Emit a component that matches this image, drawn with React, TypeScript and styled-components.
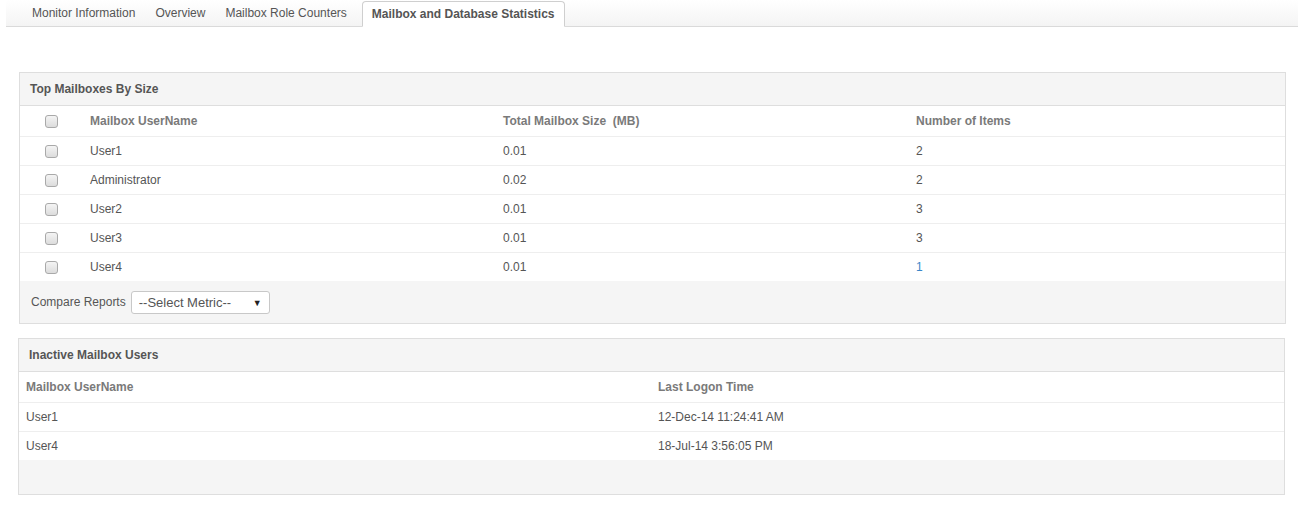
import React from 'react'
import styled, { createGlobalStyle } from 'styled-components'

const GlobalStyle = createGlobalStyle`
  html, body {
    margin: 0;
    padding: 0;
    background: #fff;
    font-family: "Liberation Sans", Arial, sans-serif;
    font-size: 12px;
    color: #555;
  }
`

type TopRow = { user: string; size: string; items: string; link?: boolean }
const topRows: TopRow[] = [
  { user: 'User1', size: '0.01', items: '2' },
  { user: 'Administrator', size: '0.02', items: '2' },
  { user: 'User2', size: '0.01', items: '3' },
  { user: 'User3', size: '0.01', items: '3' },
  { user: 'User4', size: '0.01', items: '1', link: true },
]
const inactiveRows = [
  { user: 'User1', time: '12-Dec-14 11:24:41 AM' },
  { user: 'User4', time: '18-Jul-14 3:56:05 PM' },
]
const tabs = ['Monitor Information', 'Overview', 'Mailbox Role Counters', 'Mailbox and Database Statistics']

const App: React.FC = () => {
  return <Page>
    <GlobalStyle />
    <TabBar>
      {tabs.map((t, i) => <Tab key={t} active={i === tabs.length - 1}>{t}</Tab>)}
    </TabBar>
    <Content>
      <Panel offset={19}>
        <PanelHeader>Top Mailboxes By Size</PanelHeader>
        <Row cols='63px 413px 413px 1fr' head>
          <CheckCell><Check /></CheckCell>
          <Cell>Mailbox UserName</Cell>
          <Cell>Total Mailbox Size&nbsp; (MB)</Cell>
          <Cell>Number of Items</Cell>
        </Row>
        {topRows.map(r => <Row key={r.user} cols='63px 413px 413px 1fr'>
          <CheckCell><Check /></CheckCell>
          <Cell>{r.user}</Cell>
          <Cell>{r.size}</Cell>
          <Cell link={r.link}>{r.items}</Cell>
        </Row>)}
        <PanelFooter height={42}>
          <FooterLabel>Compare Reports</FooterLabel>
          <Select>
            <span>--Select Metric--</span>
            <Arrow>▼</Arrow>
          </Select>
        </PanelFooter>
      </Panel>
      <Panel offset={18}>
        <PanelHeader>Inactive Mailbox Users</PanelHeader>
        <Row cols='632px 1fr' head>
          <Cell>Mailbox UserName</Cell>
          <Cell>Last Logon Time</Cell>
        </Row>
        {inactiveRows.map(r => <Row key={r.user} cols='632px 1fr'>
          <Cell>{r.user}</Cell>
          <Cell>{r.time}</Cell>
        </Row>)}
        <PanelFooter height={34} />
      </Panel>
    </Content>
  </Page>
}

const Page = styled.div`
  width: 1298px;
`

const TabBar = styled.div`
  margin-left: 6px;
  height: 26px;
  padding-left: 16px;
  display: flex;
  align-items: flex-end;
  background: linear-gradient(to bottom, #fff 0%, #f4f4f4 100%);
  border-bottom: 1px solid #dadada;
`

const Tab = styled.div<{ active?: boolean }>`
  height: 24px;
  line-height: 25px;
  padding: 0 9px;
  margin-bottom: ${p => p.active ? '-1px' : '0'};
  margin-left: ${p => p.active ? '5px' : '0'};
  font-size: 12px;
  color: #555;
  font-weight: ${p => p.active ? 'bold' : 'normal'};
  background: ${p => p.active ? '#fff' : 'transparent'};
  border: 1px solid ${p => p.active ? '#cfcfcf' : 'transparent'};
  border-bottom-color: ${p => p.active ? '#fff' : 'transparent'};
  border-radius: 4px 4px 0 0;
  box-sizing: content-box;
  white-space: nowrap;
`

const Content = styled.div`
  padding-top: 45px;
  display: flex;
  flex-direction: column;
  gap: 14px;
`

const Panel = styled.div<{ offset: number }>`
  margin-left: ${p => p.offset}px;
  width: 1265px;
  border: 1px solid #dedede;
  background: #fff;
`

const PanelHeader = styled.div`
  height: 32px;
  line-height: 32px;
  padding-left: 10px;
  background: #f5f5f5;
  border-bottom: 1px solid #dedede;
  font-weight: bold;
  color: #555;
`

const Row = styled.div<{ cols: string; head?: boolean }>`
  display: grid;
  grid-template-columns: ${p => p.cols};
  height: ${p => p.head ? 30 : 28}px;
  align-items: center;
  border-top: ${p => p.head ? 'none' : '1px solid #eee'};
  font-weight: ${p => p.head ? 'bold' : 'normal'};
  color: ${p => p.head ? '#7a7a7a' : '#555'};
`

const Cell = styled.div<{ link?: boolean }>`
  padding-left: 7px;
  color: ${p => p.link ? '#3a87c8' : 'inherit'};
`

const CheckCell = styled.div`
  display: flex;
  justify-content: center;
`

const Check = styled.span`
  display: inline-block;
  width: 11px;
  height: 11px;
  border: 1px solid #a9a9a9;
  border-radius: 3px;
  background: linear-gradient(to bottom, #f4f4f4 0%, #dcdcdc 100%);
`

const PanelFooter = styled.div<{ height: number }>`
  height: ${p => p.height}px;
  background: #f5f5f5;
  display: flex;
  align-items: center;
  padding-left: 11px;
  gap: 5px;
`

const FooterLabel = styled.span`
  font-size: 12px;
  color: #555;
`

const Select = styled.div`
  width: 139px;
  height: 23px;
  margin-top: 1px;
  border: 1px solid #c8c8c8;
  border-radius: 3px;
  background: #fff;
  display: flex;
  align-items: center;
  justify-content: space-between;
  padding: 0 7px 0 7px;
  box-sizing: border-box;
  font-size: 13px;
  color: #555;
`

const Arrow = styled.span`
  font-size: 9px;
  color: #222;
`

export default App
